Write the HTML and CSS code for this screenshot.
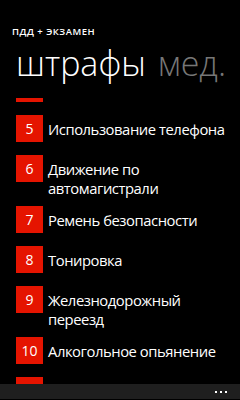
FILE: index.html
```html
<!DOCTYPE html>
<html lang="ru">
<head>
<meta charset="utf-8">
<title>ПДД + Экзамен</title>
<link rel="stylesheet" href="styles.css">
</head>
<body>
<div class="phone">
  <div class="app-title">ПДД + ЭКЗАМЕН</div>
  <div class="pivot-headers">
    <span class="pivot-header active">штрафы</span>
    <span class="pivot-header">мед.</span>
    <span class="pivot-header">помощь</span>
  </div>
  <div class="viewport">
    <ul class="fines">
      <li class="fine"><span class="num">4</span><span class="label">Обгон</span></li>
      <li class="fine"><span class="num">5</span><span class="label">Использование телефона</span></li>
      <li class="fine"><span class="num">6</span><span class="label">Движение по автомагистрали</span></li>
      <li class="fine"><span class="num">7</span><span class="label">Ремень безопасности</span></li>
      <li class="fine"><span class="num">8</span><span class="label">Тонировка</span></li>
      <li class="fine"><span class="num">9</span><span class="label">Железнодорожный переезд</span></li>
      <li class="fine"><span class="num">10</span><span class="label">Алкогольное опьянение</span></li>
      <li class="fine"><span class="num">11</span><span class="label">Парковка</span></li>
    </ul>
  </div>
  <div class="app-bar">
    <span class="dots"><i></i><i></i><i></i></span>
  </div>
</div>
</body>
</html>
```
FILE: styles.css
```css
html, body {
  margin: 0;
  padding: 0;
  background: #000;
}
body {
  font-family: "Open Sans", "Noto Sans", sans-serif;
  color: #fff;
}
.phone {
  width: 240px;
  height: 400px;
  overflow: hidden;
  display: flex;
  flex-direction: column;
  background: #000;
}
.app-title {
  font-size: 9.5px;
  font-weight: 600;
  letter-spacing: 0.5px;
  line-height: 12px;
  padding: 26px 0 0 12px;
  height: 12px;
}
.pivot-headers {
  display: flex;
  gap: 12px;
  white-space: nowrap;
  padding: 4px 0 0 16px;
  height: 56px;
  font-size: 34px;
  font-weight: 300;
  line-height: 42px;
  overflow: hidden;
}
.pivot-header {
  color: #777;
}
.pivot-header.active {
  color: #fff;
}
.viewport {
  height: 286px;
  overflow: hidden;
}
.fines {
  list-style: none;
  margin: -23px 0 0 0;
  padding: 0 0 0 16px;
}
.fine {
  display: flex;
  align-items: flex-start;
  margin-bottom: 13px;
}
.num {
  flex: none;
  width: 27px;
  height: 27px;
  background: #e51400;
  display: flex;
  align-items: center;
  justify-content: center;
  font-size: 14px;
  line-height: 1;
}
.label {
  flex: 1;
  padding: 5px 4px 0 5px;
  margin-bottom: -5px;
  font-size: 14.8px;
  letter-spacing: -0.45px;
  line-height: 19px;
}
.app-bar {
  height: 15px;
  background: #1f1f1f;
  display: flex;
  justify-content: flex-end;
  align-items: center;
  padding-right: 13px;
}
.dots {
  display: flex;
  gap: 3px;
}
.dots i {
  width: 2px;
  height: 2px;
  background: #fff;
}
```
